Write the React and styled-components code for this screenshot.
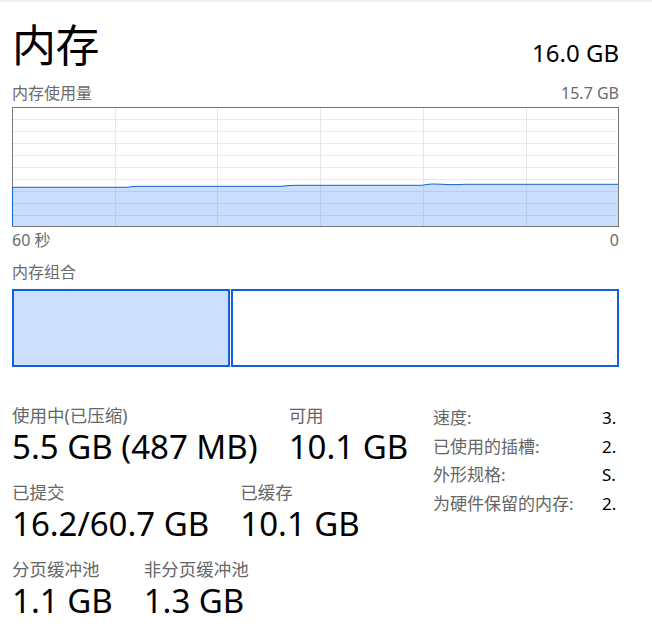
import React from 'react';
import styled, { createGlobalStyle } from 'styled-components';

const GlobalStyle = createGlobalStyle`
  html, body { margin: 0; padding: 0; background: #ffffff; }
  body { font-family: "Noto Sans", "Noto Sans CJK SC", sans-serif; color: #000; }
`;

const Page = styled.div`
  width: 652px;
  height: 626px;
  box-sizing: border-box;
  border-top: 2px solid #f2f2f2;
  padding: 0 33px 0 12px;
  overflow: hidden;
`;

const Header = styled.div`
  display: flex;
  justify-content: space-between;
  align-items: flex-end;
  margin-top: 18px;
`;

const Title = styled.h1`
  margin: 0;
  font-family: "Noto Sans CJK SC", sans-serif;
  font-weight: 400;
  font-size: 44px;
  line-height: 46px;
  letter-spacing: -0.5px;
`;

const Total = styled.div`
  font-size: 24px;
  line-height: 24px;
  margin-bottom: 1px;
`;

const AxisRow = styled.div`
  display: flex;
  justify-content: space-between;
  font-size: 16px;
  line-height: 20px;
  color: #6b6b6b;
  margin-top: ${(p) => p.$top}px;
`;

const ChartFrame = styled.div`
  margin-top: 4px;
  width: 607px;
  height: 120px;
  svg { display: block; }
`;

const Composition = styled.div`
  display: flex;
  gap: 1px;
  height: 78px;
  margin-top: 7px;
`;

const Segment = styled.div`
  box-sizing: border-box;
  border: 2px solid #1160e0;
  background: ${(p) => (p.$filled ? '#cce0fe' : '#ffffff')};
  flex: ${(p) => (p.$width ? `0 0 ${p.$width}px` : '1 1 auto')};
`;

const Stats = styled.div`
  display: grid;
  grid-template-columns: 421px 1fr;
  align-items: start;
  margin-top: 38px;
`;

const StatColumn = styled.div`
  display: flex;
  flex-direction: column;
  gap: 17px;
`;

const StatRow = styled.div`
  display: flex;
  gap: 31px;
`;

const Stat = styled.div`
  display: flex;
  flex-direction: column;
  gap: 4px;
`;

const StatLabel = styled.div`
  font-size: 17.5px;
  line-height: 20px;
  color: #666666;
  white-space: nowrap;
`;

const StatValue = styled.div`
  font-size: 33px;
  line-height: 36px;
  white-space: nowrap;
`;

const InfoGrid = styled.dl`
  display: grid;
  grid-template-columns: 169px 1fr;
  grid-auto-rows: 28.6px;
  align-content: start;
  margin: -1px 0 0;
  font-size: 17px;
  line-height: 28.6px;
`;

const InfoKey = styled.dt`
  color: #666666;
  white-space: nowrap;
`;

const InfoVal = styled.dd`
  margin: 0;
  white-space: nowrap;
  overflow: hidden;
`;

const W = 607;
const H = 120;
const hLines = Array.from({ length: 9 }, (_, i) => 12 + i * 12);
const vLines = [103, 205, 308, 411, 514];
const linePts = [
  [1, 80.3], [116, 80.3], [120, 79.6], [126, 79.3], [270, 79.3], [276, 78.6],
  [284, 78.3], [410, 78.3], [414, 77.6], [420, 77], [428, 77.2], [436, 77.6],
  [446, 77.6], [452, 77.3], [606, 77.3],
];
const lineD = linePts.map((p, i) => `${i ? 'L' : 'M'}${p[0]} ${p[1]}`).join(' ');
const fillD = `${lineD} L606 119 L1 119 Z`;

function UsageChart() {
  return (
    <ChartFrame>
      <svg width={W} height={H} viewBox={`0 0 ${W} ${H}`}>
        <defs>
          <clipPath id="fillClip">
            <path d={fillD} />
          </clipPath>
        </defs>
        <rect x="0" y="0" width={W} height={H} fill="#ffffff" />
        <g stroke="#e8e8e8" strokeWidth="1">
          {hLines.map((y) => (
            <line key={`h${y}`} x1="1" x2="605" y1={y + 0.5} y2={y + 0.5} />
          ))}
          {vLines.map((x) => (
            <line key={`v${x}`} x1={x + 0.5} x2={x + 0.5} y1="1" y2="119" />
          ))}
        </g>
        <path d={fillD} fill="#c9defc" />
        <g stroke="#b5cdf0" strokeWidth="1" clipPath="url(#fillClip)">
          {hLines.map((y) => (
            <line key={`bh${y}`} x1="1" x2="605" y1={y + 0.5} y2={y + 0.5} />
          ))}
          {vLines.map((x) => (
            <line key={`bv${x}`} x1={x + 0.5} x2={x + 0.5} y1="1" y2="119" />
          ))}
        </g>
        <rect x="0.5" y="0.5" width={W - 1} height={H - 1} fill="none" stroke="#787878" />
        <path d={lineD} fill="none" stroke="#1a5fd6" strokeWidth="1" />
        <line x1="0.5" x2="0.5" y1="80" y2="119" stroke="#1a5fd6" />
      </svg>
    </ChartFrame>
  );
}

const statRows = [
  [
    { label: '使用中(已压缩)', value: '5.5 GB (487 MB)' },
    { label: '可用', value: '10.1 GB' },
  ],
  [
    { label: '已提交', value: '16.2/60.7 GB' },
    { label: '已缓存', value: '10.1 GB' },
  ],
  [
    { label: '分页缓冲池', value: '1.1 GB' },
    { label: '非分页缓冲池', value: '1.3 GB' },
  ],
];

const info = [
  ['速度:', '3.'],
  ['已使用的插槽:', '2.'],
  ['外形规格:', 'S.'],
  ['为硬件保留的内存:', '2.'],
];

export default function App() {
  return (
    <>
      <GlobalStyle />
      <Page>
        <Header>
          <Title>内存</Title>
          <Total>16.0 GB</Total>
        </Header>
        <AxisRow $top={17}>
          <span>内存使用量</span>
          <span>15.7 GB</span>
        </AxisRow>
        <UsageChart />
        <AxisRow $top={3}>
          <span>60 秒</span>
          <span>0</span>
        </AxisRow>
        <AxisRow $top={12}>
          <span>内存组合</span>
        </AxisRow>
        <Composition>
          <Segment $filled $width={218} />
          <Segment />
        </Composition>
        <Stats>
          <StatColumn>
            {statRows.map((row, i) => (
              <StatRow key={i}>
                {row.map((s) => (
                  <Stat key={s.label}>
                    <StatLabel>{s.label}</StatLabel>
                    <StatValue>{s.value}</StatValue>
                  </Stat>
                ))}
              </StatRow>
            ))}
          </StatColumn>
          <InfoGrid>
            {info.map(([k, v]) => (
              <React.Fragment key={k}>
                <InfoKey>{k}</InfoKey>
                <InfoVal>{v}</InfoVal>
              </React.Fragment>
            ))}
          </InfoGrid>
        </Stats>
      </Page>
    </>
  );
}
